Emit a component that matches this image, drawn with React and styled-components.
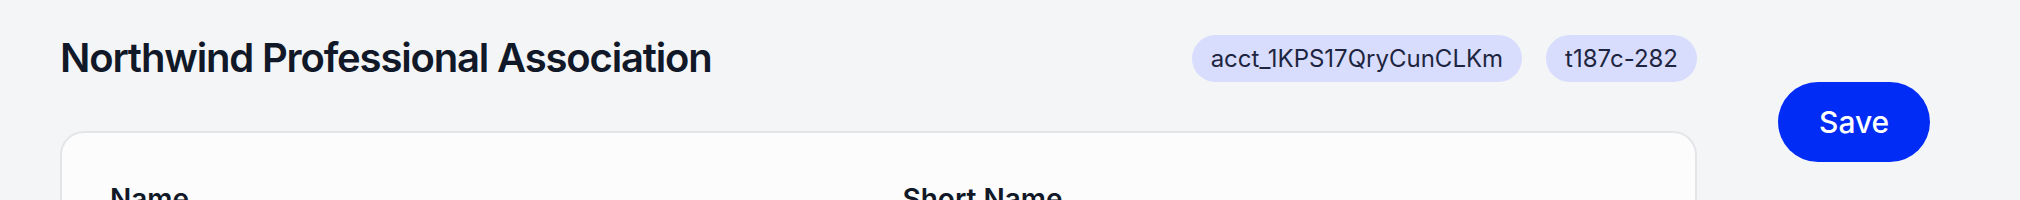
import React from 'react';
import styled, { createGlobalStyle } from 'styled-components';

const GlobalStyle = createGlobalStyle`
  html, body {
    margin: 0;
    padding: 0;
    background: #f4f5f7;
    font-family: Inter, "Noto Sans", sans-serif;
    color: #111827;
  }
  * { box-sizing: border-box; }
`;

const Page = styled.div`
  display: flex;
  align-items: flex-start;
  gap: 81px;
  padding: 34px 0 0 60px;
  width: 2020px;
`;

const Main = styled.div`
  width: 1637px;
  display: flex;
  flex-direction: column;
  gap: 49px;
`;

const Header = styled.div`
  display: flex;
  align-items: center;
  justify-content: space-between;
  height: 48px;
`;

const Title = styled.h1`
  margin: 0;
  font-size: 40px;
  font-weight: 600;
  line-height: 48px;
  letter-spacing: -0.029em;
  color: #111827;
`;

const Badges = styled.div`
  display: flex;
  gap: 24px;
`;

const Badge = styled.span`
  display: inline-flex;
  align-items: center;
  height: 47px;
  padding: 0 19px;
  border-radius: 999px;
  background: #d8ddfd;
  color: #1e2540;
  font-size: 24px;
`;

const Card = styled.section`
  background: #fcfcfc;
  border: 2px solid #e4e5e9;
  border-radius: 24px;
  padding: 48px;
  display: grid;
  grid-template-columns: 1fr 1fr;
  gap: 48px;
  min-height: 300px;
`;

const Field = styled.div`
  display: flex;
  flex-direction: column;
  gap: 12px;
`;

const Label = styled.label`
  font-size: 28px;
  font-weight: 600;
  line-height: 36px;
  color: #111827;
`;

const Aside = styled.div`
  padding-top: 48px;
`;

const SaveButton = styled.button`
  height: 80px;
  padding: 0 41px;
  border: none;
  border-radius: 999px;
  background: #002cf5;
  color: #fff;
  font-family: Inter, "Noto Sans", sans-serif;
  font-size: 30px;
  font-weight: 500;
  cursor: pointer;
`;

export default function App() {
  return (
    <>
      <GlobalStyle />
      <Page>
        <Main>
          <Header>
            <Title>Northwind Professional Association</Title>
            <Badges>
              <Badge>acct_1KPS17QryCunCLKm</Badge>
              <Badge>t187c-282</Badge>
            </Badges>
          </Header>
          <Card>
            <Field>
              <Label>Name</Label>
            </Field>
            <Field>
              <Label>Short Name</Label>
            </Field>
          </Card>
        </Main>
        <Aside>
          <SaveButton>Save</SaveButton>
        </Aside>
      </Page>
    </>
  );
}
